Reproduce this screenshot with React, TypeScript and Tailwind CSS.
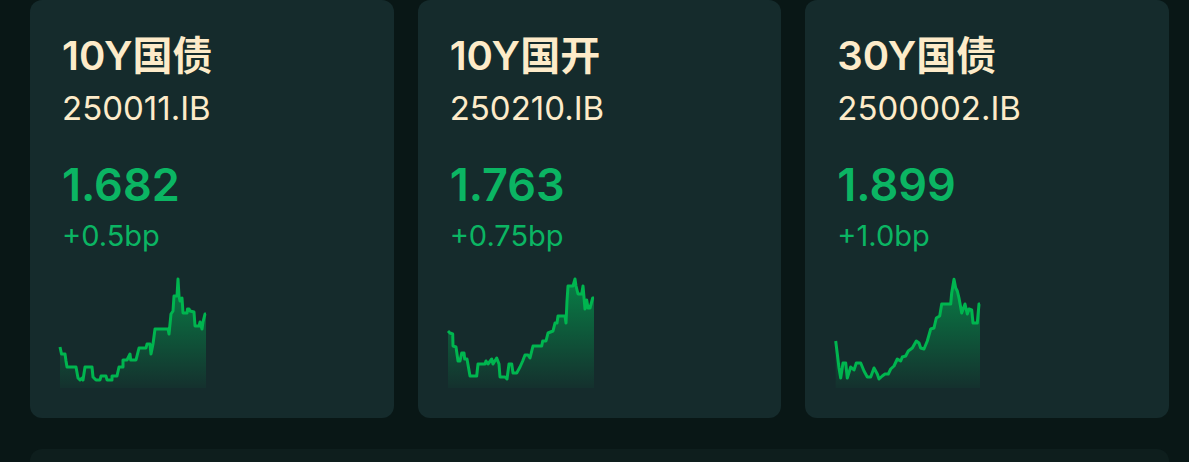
import React from "react";

type Bond = {
  name: string;
  code: string;
  yieldValue: string;
  change: string;
  points: [number, number][];
};

const CHART_W = 146;
const CHART_H = 110;

const bonds: Bond[] = [
  {
    name: "10Y国债",
    code: "250011.IB",
    yieldValue: "1.682",
    change: "+0.5bp",
    points: [
      [0, 69], [1.5, 76], [5, 76], [6, 83], [7, 89], [16, 89], [18, 100], [20, 102], [22, 100],
      [23, 102], [25, 89], [32, 89], [33, 99], [36, 102], [40, 102], [41, 98], [46, 98], [47, 102],
      [52, 102], [52, 98], [57, 98], [59, 89], [63, 89], [63, 82], [67, 82], [70, 76], [70.7, 82],
      [76, 82], [79, 70], [86, 70], [87, 66], [90, 66], [91, 76], [93, 66], [95, 51], [108, 51],
      [109, 56], [111, 36], [113, 33], [114, 18], [117, 18], [118, 1], [119, 18], [120, 23],
      [122, 20], [123, 35], [127, 35], [127.5, 31], [129, 31], [130, 33], [134, 34], [135, 48],
      [139, 48], [140, 44], [142, 51], [143, 44], [145, 36], [146, 36],
    ],
  },
  {
    name: "10Y国开",
    code: "250210.IB",
    yieldValue: "1.763",
    change: "+0.75bp",
    points: [
      [0, 53], [2, 55], [4.7, 56], [5, 68], [8, 69], [10, 83], [12, 83], [13.7, 75], [16, 75],
      [16.7, 81], [19, 81], [22, 98], [28.7, 98], [30, 86], [37, 86], [38, 83], [40, 86], [43.7, 81],
      [45, 86], [48.7, 80], [51, 86], [52, 99], [57, 99], [59, 101], [61, 86], [63.7, 86], [65, 95],
      [68.7, 95], [72, 89], [74.7, 83], [77, 77], [80, 77], [82, 80], [85, 68], [93.7, 68], [94.7, 63],
      [98, 63], [100, 55], [105, 53], [107, 45], [109, 45], [110, 38], [117, 38], [118, 45], [119, 23],
      [120, 8], [125, 8], [127, 1], [128, 8], [130, 16], [133.7, 16], [135, 8], [137, 31], [138.7, 22],
      [140, 30], [142, 30], [144.7, 20], [146, 20],
    ],
  },
  {
    name: "30Y国债",
    code: "2500002.IB",
    yieldValue: "1.899",
    change: "+1.0bp",
    points: [
      [0.7, 63], [2.3, 76], [4, 90], [5.7, 100], [8, 85], [10.7, 85], [12.3, 100], [15.7, 89], [19, 92],
      [21.3, 85], [25.7, 85], [29, 93], [32.3, 99], [35.7, 99], [39, 90], [42.3, 96], [44, 101],
      [47.3, 98], [50, 96], [53.3, 96], [55.7, 91], [59, 88], [62.3, 81], [65.7, 83], [67.3, 79],
      [70.7, 78], [73.3, 73], [77.3, 70], [81.3, 63], [84, 65], [85.7, 70], [89, 71], [92.3, 63],
      [95.7, 51], [99, 50], [101.3, 40], [104.7, 38], [106.7, 26], [115.7, 26], [116.7, 15], [119, 1.3],
      [120.7, 10], [122.3, 13], [124, 20], [126.7, 35], [130, 26], [132.3, 36], [134, 31], [136.7, 32],
      [138, 45], [142.3, 45], [144, 26], [145, 26],
    ],
  },
];

function Sparkline({ points, id }: { points: [number, number][]; id: string }) {
  const line = points.map(([x, y], i) => `${i === 0 ? "M" : "L"}${x},${y}`).join(" ");
  const last = points[points.length - 1];
  const area = `${line} L${last[0]},${CHART_H} L${points[0][0]},${CHART_H} Z`;

  return (
    <svg width={CHART_W} height={CHART_H} viewBox={`0 0 ${CHART_W} ${CHART_H}`} className="block overflow-visible">
      <defs>
        <linearGradient id={id} x1="0" y1="0" x2="0" y2="1">
          <stop offset="0%" stopColor="#00b356" stopOpacity="0.62" />
          <stop offset="100%" stopColor="#00b356" stopOpacity="0.04" />
        </linearGradient>
      </defs>
      <path d={area} fill={`url(#${id})`} />
      <path d={line} fill="none" stroke="#00b54f" strokeWidth="3" strokeLinejoin="round" />
    </svg>
  );
}

function BondCard({ bond, index }: { bond: Bond; index: number }) {
  return (
    <div className="h-[418px] rounded-xl bg-[#152b2c] px-[30px] pt-[36px]">
      <div className="px-[2px]">
        <p className="text-[40px] leading-none font-semibold text-[#fdebc9]">{bond.name}</p>
        <p className="mt-[16px] text-[33px] leading-none text-[#fdebc9]">{bond.code}</p>
        <p className="mt-[37px] text-[45px] leading-none font-semibold text-[#0bb563]">{bond.yieldValue}</p>
        <p className="mt-[14px] text-[29px] leading-none text-[#0bb563]">{bond.change}</p>
      </div>
      <div className="mt-[28px]">
        <Sparkline points={bond.points} id={`spark-${index}`} />
      </div>
    </div>
  );
}

export default function App() {
  return (
    <div
      className="h-[462px] overflow-hidden bg-[#091716] pl-[30px] pr-[20px]"
      style={{ fontFamily: 'Inter, "Noto Sans CJK SC", sans-serif' }}
    >
      <div className="grid grid-cols-3 gap-[24px]">
        {bonds.map((b, i) => (
          <BondCard key={b.code} bond={b} index={i} />
        ))}
      </div>
      <div className="mt-[31px] h-[200px] rounded-xl bg-[#0e1e1d]" />
    </div>
  );
}
